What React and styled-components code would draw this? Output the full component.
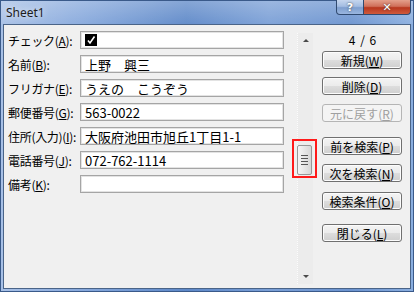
import React from 'react';
import styled, { createGlobalStyle } from 'styled-components';

const GlobalStyle = createGlobalStyle`
  html, body {
    margin: 0;
    padding: 0;
    background: #6d94cd;
  }
  body {
    font-family: "Noto Sans CJK JP", "Noto Sans", sans-serif;
    font-size: 12px;
  }
`

const Window = styled.div`
  width: 414px;
  height: 292px;
  display: flex;
  flex-direction: column;
  box-sizing: border-box;
  background: linear-gradient(90deg, #a7c0e6 0%, #86a8dc 20%, #5d88c8 45%, #7a9fd6 65%, #6b93cf 85%, #8aaedf 100%);
  border: 1px solid #3a5a8a;
`

const TitleBar = styled.div`
  height: 23px;
  display: flex;
  align-items: flex-start;
  justify-content: space-between;
  padding-left: 5px;
  background: linear-gradient(180deg, rgba(255,255,255,0.25) 0%, rgba(255,255,255,0.05) 100%);
`

const Title = styled.div`
  font-family: "Noto Sans", "Liberation Sans", sans-serif;
  font-size: 12px;
  color: #1c1c1c;
  margin-top: 3px;
  text-shadow: 0 0 6px rgba(255,255,255,0.9);
`

const Caption = styled.div`
  display: flex;
  margin-top: -1px;
  margin-right: 2px;
`

const CapButton = styled.div`
  width: ${p => p.$w}px;
  height: 15px;
  box-sizing: border-box;
  display: flex;
  align-items: center;
  justify-content: center;
  border: 1px solid #304a70;
  border-top: none;
  color: #fff;
  font-family: "DejaVu Sans", sans-serif;
  font-weight: bold;
  font-size: 11px;
  background: ${p => p.$red
    ? 'linear-gradient(180deg, #e4a08c 0%, #d0705a 45%, #b8371e 55%, #cf5a3c 100%)'
    : 'linear-gradient(180deg, #c6d6ee 0%, #a4bde2 45%, #7f9fcf 55%, #9ab6df 100%)'};
  border-radius: ${p => p.$red ? '0 0 4px 0' : '0 0 0 4px'};
  border-left: ${p => p.$red ? 'none' : '1px solid #304a70'};
  text-shadow: 0 0 2px #333;
`

const Client = styled.div`
  flex: 1;
  margin: 0 2px 2px 2px;
  border: 1px solid #4a6488;
  background: #f0f0f0;
  display: flex;
  padding: 6px 0 0 4px;
  box-sizing: border-box;
`

const Fields = styled.div`
  width: 276px;
  display: flex;
  flex-direction: column;
  gap: 6px;
`

const Row = styled.div`
  display: flex;
  align-items: center;
  height: 18px;
`

const Label = styled.div`
  width: 72px;
  flex-shrink: 0;
  color: #000;
  white-space: nowrap;
  letter-spacing: -0.3px;
  font-size: 12px;
`

const Input = styled.div`
  width: 204px;
  height: 18px;
  flex-shrink: 0;
  box-sizing: border-box;
  border: 1px solid #a5a5a5;
  box-shadow: inset 0 0 0 1px #e3e3e3;
  background: #fff;
  display: flex;
  align-items: center;
  padding-left: 4px;
  font-size: 13px;
  color: #000;
  white-space: nowrap;
  overflow: hidden;
`

const Check = styled.div`
  width: 12px;
  height: 12px;
  background: #000;
  display: flex;
  align-items: center;
  justify-content: center;
`

const ScrollTrack = styled.div`
  position: relative;
  width: 16px;
  margin: 2px 0 4px 13px;
  border-left: 1px dotted #fcfcfc;
  background: #ececec;
  display: flex;
  flex-direction: column;
  justify-content: space-between;
  align-items: center;
  padding: 6px 0;
  box-sizing: border-box;
`

const Arrow = styled.div`
  width: 0;
  height: 0;
  border-left: 3px solid transparent;
  border-right: 3px solid transparent;
  ${p => p.$down ? 'border-top: 3px solid #4a4a4a;' : 'border-bottom: 3px solid #4a4a4a;'}
`

const Thumb = styled.div`
  position: absolute;
  left: -1px;
  top: 112px;
  width: 15px;
  height: 30px;
  box-sizing: border-box;
  border: 1px solid #979797;
  border-radius: 2px;
  background: linear-gradient(90deg, #f6f6f6 0%, #e6e6e6 50%, #d6d6d6 100%);
  display: flex;
  flex-direction: column;
  align-items: center;
  justify-content: center;
  gap: 2px;
`

const Grip = styled.div`
  width: 7px;
  height: 1px;
  background: #555;
`

const Highlight = styled.div`
  position: absolute;
  left: -6px;
  top: 106px;
  width: 25px;
  height: 39px;
  box-sizing: border-box;
  border: 2px solid #ff1a1a;
`

const Side = styled.div`
  width: 80px;
  margin-left: 9px;
  display: flex;
  flex-direction: column;
`

const Counter = styled.div`
  height: 16px;
  display: flex;
  align-items: center;
  justify-content: center;
  padding-left: 2px;
  font-size: 12px;
  letter-spacing: 1px;
`

const Btn = styled.div`
  height: 18px;
  margin-top: ${p => p.$gap}px;
  box-sizing: border-box;
  border: 1px solid ${p => p.$disabled ? '#b5b5b5' : '#707070'};
  border-radius: 3px;
  background: ${p => p.$disabled
    ? '#f4f4f4'
    : 'linear-gradient(180deg, #f4f4f4 0%, #ebebeb 50%, #dddddd 51%, #cfcfcf 100%)'};
  box-shadow: inset 0 0 0 1px ${p => p.$disabled ? '#f4f4f4' : '#fcfcfc'};
  display: flex;
  align-items: center;
  justify-content: center;
  color: ${p => p.$disabled ? '#a0a0a0' : '#000'};
  font-size: 12px;
  white-space: nowrap;
`

const fields = [
  { label: 'チェック', key: 'A', check: true },
  { label: '名前', key: 'B', value: '上野　興三' },
  { label: 'フリガナ', key: 'E', value: 'うえの　こうぞう' },
  { label: '郵便番号', key: 'G', value: '563-0022' },
  { label: '住所(入力)', key: 'I', value: '大阪府池田市旭丘1丁目1-1' },
  { label: '電話番号', key: 'J', value: '072-762-1114' },
  { label: '備考', key: 'K', value: '' },
];

const buttons = [
  { text: '新規', key: 'W', gap: 4 },
  { text: '削除', key: 'D', gap: 8 },
  { text: '元に戻す', key: 'R', gap: 9, disabled: true },
  { text: '前を検索', key: 'P', gap: 15 },
  { text: '次を検索', key: 'N', gap: 9 },
  { text: '検索条件', key: 'O', gap: 10 },
  { text: '閉じる', key: 'L', gap: 14 },
];

export default function App() {
  return (
    <Window>
      <GlobalStyle />
      <TitleBar>
        <Title>Sheet1</Title>
        <Caption>
          <CapButton $w={28}>?</CapButton>
          <CapButton $w={47} $red>✕</CapButton>
        </Caption>
      </TitleBar>
      <Client>
        <Fields>
          {fields.map(f => (
            <Row key={f.key}>
              <Label>{f.label}(<u>{f.key}</u>):</Label>
              <Input>
                {f.check ? (
                  <Check>
                    <svg width="10" height="10" viewBox="0 0 10 10">
                      <path d="M2 5.5 L4 8 L8.5 1.5" stroke="#fff" strokeWidth="1.6" fill="none" />
                    </svg>
                  </Check>
                ) : f.value}
              </Input>
            </Row>
          ))}
        </Fields>
        <ScrollTrack>
          <Arrow />
          <Arrow $down />
          <Thumb>
            <Grip />
            <Grip />
            <Grip />
            <Grip />
          </Thumb>
          <Highlight />
        </ScrollTrack>
        <Side>
          <Counter>4 / 6</Counter>
          {buttons.map(b => (
            <Btn key={b.key} $gap={b.gap} $disabled={b.disabled}>
              {b.text}(<u>{b.key}</u>)
            </Btn>
          ))}
        </Side>
      </Client>
    </Window>
  );
}
